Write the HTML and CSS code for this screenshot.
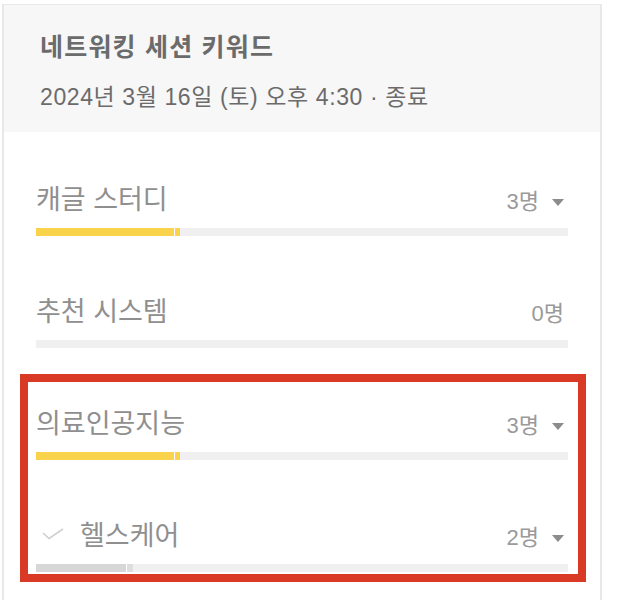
FILE: index.html
```html
<!DOCTYPE html>
<html>
<head>
	<meta charset="utf-8" />
	<title>네트워킹 세션 키워드</title>
	<link rel="stylesheet" href="styles.css">
</head>
<body>
<div class="card">
	<div class="cardHead">
		<h1>네트워킹 세션 키워드</h1>
		<p>2024년 3월 16일 (토) 오후 4:30 · 종료</p>
	</div>
	<ul class="keywords">
		<li class="keyword">
			<div class="row">
				<span class="label">캐글 스터디</span>
				<span class="count">3명<i class="caret"></i></span>
			</div>
			<div class="bar"><span class="fill yellow" style="width:138px"></span><span class="tail yellow"></span></div>
		</li>
		<li class="keyword">
			<div class="row">
				<span class="label">추천 시스템</span>
				<span class="count">0명</span>
			</div>
			<div class="bar"></div>
		</li>
		<li class="keyword">
			<div class="row">
				<span class="label">의료인공지능</span>
				<span class="count">3명<i class="caret"></i></span>
			</div>
			<div class="bar"><span class="fill yellow" style="width:138px"></span><span class="tail yellow"></span></div>
		</li>
		<li class="keyword sub">
			<div class="row">
				<span class="label"><svg class="check" width="22" height="12" viewBox="0 0 22 12"><polyline points="1,5 7,10.5 21,1" fill="none" stroke="#cfcfcf" stroke-width="1.6"/></svg>헬스케어</span>
				<span class="count">2명<i class="caret"></i></span>
			</div>
			<div class="bar"><span class="fill grey" style="width:90px"></span><span class="tail grey"></span></div>
		</li>
	</ul>
</div>
<div class="mark"></div>
</body>
</html>
```

FILE: styles.css
```css
body{
	margin: 0;
	padding: 0;
	position: relative;
	font-family: "Liberation Sans", "Noto Sans CJK KR", sans-serif;
	background-color: #fff;
}
/* carte */
.card{
	box-sizing: border-box;
	width: 600px;
	margin: 4px 0 0 2px;
	border: 2px solid #e8e8e8;
	border-top-width: 1px;
	border-bottom: none;
	padding-bottom: 40px;
}
.cardHead{
	height: 127px;
	box-sizing: border-box;
	padding: 26px 36px 0 36px;
	background-color: #f7f7f7;
}
.cardHead h1{
	margin: 0;
	font-size: 25px;
	line-height: 32px;
	letter-spacing: 1.2px;
	font-weight: bold;
	color: #6b6b6b;
}
.cardHead p{
	margin: 19px 0 0 0;
	font-size: 23px;
	line-height: 30px;
	letter-spacing: 0.6px;
	color: #6b6b6b;
}
/* liste */
.keywords{
	list-style: none;
	margin: 0;
	padding: 54px 32px 0 32px;
}
.keyword{
	padding-bottom: 62px;
}
.row{
	display: flex;
	justify-content: space-between;
	align-items: flex-end;
	padding-right: 4px;
}
.label{
	display: flex;
	align-items: center;
	font-size: 27px;
	line-height: 28px;
	color: #8f8f8f;
}
.check{
	margin: -4px 16px 0 6px;
}
.count{
	display: flex;
	align-items: center;
	font-size: 22px;
	line-height: 24px;
	color: #9a9a9a;
}
.caret{
	width: 0;
	height: 0;
	margin-left: 13px;
	border-left: 6px solid transparent;
	border-right: 6px solid transparent;
	border-top: 7px solid #8c8c8c;
}
.bar{
	display: flex;
	height: 8px;
	margin-top: 14px;
	background-color: #f0f0f0;
}
.fill{
	display: block;
	height: 8px;
	border-right: 1px solid #fff;
}
.tail{
	display: block;
	width: 5px;
	height: 8px;
}
.yellow{
	background-color: #f9d34b;
}
.fill.grey{
	background-color: #d7d7d7;
}
.tail.grey{
	width: 6px;
	background-color: #dedede;
}
/* cadre rouge */
.mark{
	position: absolute;
	left: 20px;
	top: 374px;
	width: 566px;
	height: 208px;
	box-sizing: border-box;
	border: 8px solid #d93a26;
}
```
